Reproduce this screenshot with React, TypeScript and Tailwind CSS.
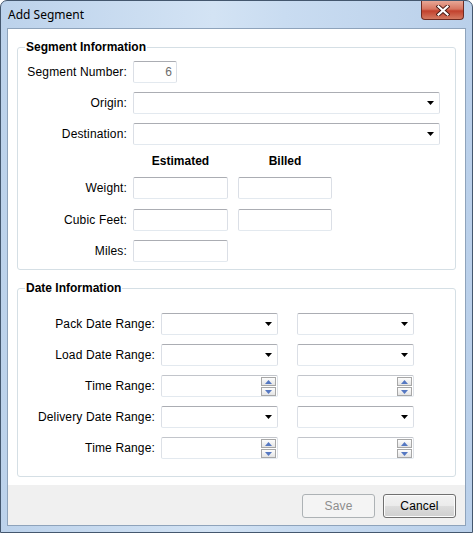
import React from "react";

const font = { fontFamily: '"Liberation Sans", Arial, sans-serif' };

function Arrow() {
  return (
    <svg width="7" height="4" viewBox="0 0 7 4" className="block">
      <polygon points="0,0 7,0 3.5,4" fill="#000" />
    </svg>
  );
}

function Box({ w, children, className = "" }: { w: string; children?: React.ReactNode; className?: string }) {
  return (
    <div
      className={`${w} h-[22px] shrink-0 bg-white border border-t-[#abadb3] border-x-[#dbdfe6] border-b-[#e3e9ef] rounded-[2px] flex items-center ${className}`}
    >
      {children}
    </div>
  );
}

function Combo({ w }: { w: string }) {
  return (
    <Box w={w} className="justify-end pr-[5px]">
      <Arrow />
    </Box>
  );
}

function SpinBtn({ up }: { up?: boolean }) {
  return (
    <div className="w-[15px] h-[9px] border border-[#a7a7a7] bg-[linear-gradient(to_bottom,#fdfdfd,#e4e4e4)] flex items-center justify-center">
      <svg width="7" height="4" viewBox="0 0 7 4" className="block">
        {up ? (
          <polygon points="0,4 7,4 3.5,0" fill="#5578c2" />
        ) : (
          <polygon points="0,0 7,0 3.5,4" fill="#5578c2" />
        )}
      </svg>
    </div>
  );
}

function Spin({ w }: { w: string }) {
  return (
    <div
      className={`${w} h-[22px] shrink-0 bg-white border border-t-[#c2c5cb] border-x-[#dde1e7] border-b-[#e3e9ef] rounded-[2px] flex flex-col items-end pt-[1px] pr-[1px] gap-[1px]`}
    >
      <SpinBtn up />
      <SpinBtn />
    </div>
  );
}

function Label({ w, children }: { w: string; children: React.ReactNode }) {
  return (
    <div className={`${w} shrink-0 text-right text-[12px] leading-[14px] tracking-[0.15px] text-black whitespace-nowrap`}>
      {children}
    </div>
  );
}

function Row({ children }: { children: React.ReactNode }) {
  return <div className="flex items-center h-[22px]">{children}</div>;
}

export default function App() {
  return (
    <div
      style={font}
      className="w-[473px] h-[533px] flex flex-col border border-[#44576e] rounded-t-[7px] overflow-hidden bg-[linear-gradient(to_right,#bcd2eb,#d3e3f4_45%,#c9dcf1_60%,#bad0ea)]"
    >
      {/* Title bar */}
      <div className="h-[27px] flex items-start justify-between pl-[7px] shrink-0">
        <span className="mt-[7px] text-[12px] leading-[14px] text-black" style={{ fontFamily: '"Noto Sans", "Liberation Sans", sans-serif' }}>
          Add Segment
        </span>
        <div className="w-[43px] h-[19px] mr-[8px] border border-t-0 border-[#6e2b22] rounded-b-[4px] bg-[linear-gradient(to_bottom,#e8a796,#d77560_45%,#c2412d_55%,#d47a62)] flex items-center justify-center">
          <svg width="14" height="11" viewBox="0 0 14 11" className="block">
            <path d="M2.5 1.5 L11.5 9.5 M11.5 1.5 L2.5 9.5" stroke="#4a1c16" strokeWidth="4" strokeLinecap="square" />
            <path d="M2.5 1.5 L11.5 9.5 M11.5 1.5 L2.5 9.5" stroke="#ffffff" strokeWidth="2.2" strokeLinecap="square" />
          </svg>
        </div>
      </div>

      {/* Client */}
      <div className="mx-[6px] mb-[6px] flex-1 border border-[#8ea3bb] bg-white flex flex-col">
        <div className="flex-1 px-[9px] pt-[11px]">
          {/* Segment Information */}
          <fieldset className="border border-[#d5dfe5] rounded-[3px] pb-[7px] pt-[7px]">
            <legend className="ml-[7px] px-[1px] text-[12px] leading-[14px] font-bold text-black">Segment Information</legend>
            <div className="flex flex-col gap-[9px]">
              <Row>
                <Label w="w-[109px]">Segment Number:</Label>
                <div className="ml-[6px]">
                  <Box w="w-[44px]" className="justify-end pr-[4px]">
                    <span className="text-[12px] leading-[14px] text-[#6d6d6d]">6</span>
                  </Box>
                </div>
              </Row>
              <Row>
                <Label w="w-[109px]">Origin:</Label>
                <div className="ml-[6px]">
                  <Combo w="w-[307px]" />
                </div>
              </Row>
              <Row>
                <Label w="w-[109px]">Destination:</Label>
                <div className="ml-[6px]">
                  <Combo w="w-[307px]" />
                </div>
              </Row>
              <div className="flex h-[14px] text-[12px] leading-[14px] font-bold text-black">
                <div className="w-[115px] shrink-0" />
                <div className="w-[95px] text-center">Estimated</div>
                <div className="w-[10px]" />
                <div className="w-[94px] text-center">Billed</div>
              </div>
              <Row>
                <Label w="w-[109px]">Weight:</Label>
                <div className="ml-[6px] flex gap-[10px]">
                  <Box w="w-[95px]" />
                  <Box w="w-[94px]" />
                </div>
              </Row>
              <div className="mt-[1px]">
                <Row>
                  <Label w="w-[109px]">Cubic Feet:</Label>
                  <div className="ml-[6px] flex gap-[10px]">
                    <Box w="w-[95px]" />
                    <Box w="w-[94px]" />
                  </div>
                </Row>
              </div>
              <Row>
                <Label w="w-[109px]">Miles:</Label>
                <div className="ml-[6px]">
                  <Box w="w-[95px]" />
                </div>
              </Row>
            </div>
          </fieldset>

          {/* Date Information */}
          <fieldset className="mt-[11px] border border-[#d5dfe5] rounded-[3px] pt-[18px] pb-[17px]">
            <legend className="ml-[7px] px-[1px] text-[12px] leading-[14px] font-bold text-black">Date Information</legend>
            <div className="flex flex-col gap-[9px]">
              {[
                ["Pack Date Range:", "combo"],
                ["Load Date Range:", "combo"],
                ["Time Range:", "spin"],
                ["Delivery Date Range:", "combo"],
                ["Time Range:", "spin"],
              ].map(([label, kind], i) => (
                <Row key={i}>
                  <Label w="w-[137px]">{label}</Label>
                  <div className="ml-[6px] flex gap-[19px]">
                    {kind === "combo" ? (
                      <>
                        <Combo w="w-[117px]" />
                        <Combo w="w-[117px]" />
                      </>
                    ) : (
                      <>
                        <Spin w="w-[117px]" />
                        <Spin w="w-[117px]" />
                      </>
                    )}
                  </div>
                </Row>
              ))}
            </div>
          </fieldset>
        </div>

        {/* Button bar */}
        <div className="h-[40px] shrink-0 bg-[#f0f0f0] flex justify-end items-start pt-[9px] pr-[9px] gap-[8px]">
          <button className="w-[73px] h-[24px] border border-[#adb2b5] rounded-[3px] bg-[#f4f4f4] text-[12px] tracking-[0.15px] text-[#8d8d8d]">
            Save
          </button>
          <button className="w-[73px] h-[24px] border border-[#707070] rounded-[3px] bg-[linear-gradient(to_bottom,#f2f2f2_0%,#ebebeb_50%,#dddddd_50%,#cfcfcf_100%)] text-[12px] tracking-[0.15px] text-black shadow-[inset_0_0_0_1px_#fcfcfc]">
            Cancel
          </button>
        </div>
      </div>
    </div>
  );
}
